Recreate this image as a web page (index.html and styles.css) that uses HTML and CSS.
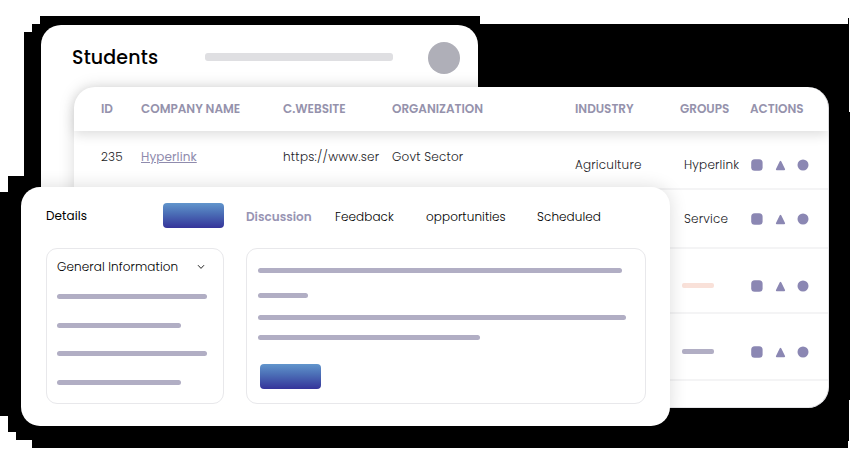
FILE: index.html
```
<!DOCTYPE html>
<html lang="en">
<head>
<meta charset="utf-8">
<title>Students</title>
<link rel="stylesheet" href="styles.css">
</head>
<body>
<main class="stage">
  <svg class="backdrop" width="850" height="450" viewBox="0 0 850 450" shape-rendering="crispEdges" aria-hidden="true">
    <path d="M40 16H480V24H848V18H849V112H850V400H849V441H848V448H32V440H16V432H8V416H0V192H8V176H24V32H32V24H40Z"/>
  </svg>
  <svg class="symbols" width="0" height="0" aria-hidden="true">
    <symbol id="actions" viewBox="0 0 60 14">
      <rect x="1.2" y="1.3" width="11.4" height="11.4" rx="3.5"/>
      <path d="M30.5 3.6L34.3 11.4H26.7Z" stroke="#8b87b3" stroke-width="1.6" stroke-linejoin="round"/>
      <circle cx="53" cy="7" r="5.5"/>
    </symbol>
  </svg>

  <section class="window students">
    <h1 class="title">Students</h1>
    <span class="search"></span>
    <span class="avatar"></span>
  </section>

  <section class="window table">
    <div class="row head">
      <span>ID</span><span>COMPANY NAME</span><span>C.WEBSITE</span><span>ORGANIZATION</span><span>INDUSTRY</span><span>GROUPS</span><span>ACTIONS</span>
    </div>
    <div class="row first">
      <span class="up">235</span><span class="up link">Hyperlink</span><span class="up url">https://www.ser</span><span class="up">Govt Sector</span><span>Agriculture</span><span class="group">Hyperlink</span><svg class="actions"><use href="#actions"/></svg>
    </div>
    <div class="row second">
      <span class="group">Service</span><svg class="actions"><use href="#actions"/></svg>
    </div>
    <div class="row third">
      <span class="group"><i class="pill peach"></i></span><svg class="actions"><use href="#actions"/></svg>
    </div>
    <div class="row fourth">
      <span class="group"><i class="pill"></i></span><svg class="actions"><use href="#actions"/></svg>
    </div>
  </section>

  <section class="window details">
    <nav class="tabs">
      <span class="name">Details</span><span class="button"></span><span class="current">Discussion</span><span>Feedback</span><span>opportunities</span><span>Scheduled</span>
    </nav>
    <div class="panels">
      <div class="panel general">
        <div class="panel-head"><span>General Information</span>
          <svg class="chevron" width="8" height="6" viewBox="0 0 8 6"><path d="M1 1.2L4 4.4L7 1.2"/></svg>
        </div>
        <i class="line wide"></i><i class="line"></i><i class="line wide"></i><i class="line"></i>
      </div>
      <div class="panel discussion">
        <i class="line l1"></i><i class="line l2"></i><i class="line l3"></i><i class="line l4"></i>
        <span class="button"></span>
      </div>
    </div>
  </section>
</main>
</body>
</html>
```
FILE: styles.css
```
* { box-sizing: border-box; }
body {
  margin: 0;
  background: #fff;
  color: #222226;
  font: 300 12px/18px Poppins, Inter, "Open Sans", sans-serif;
}
.stage { position: relative; width: 850px; height: 450px; overflow: hidden; }
.backdrop { display: block; }
.symbols { position: absolute; }
.window { position: absolute; background: #fff; }
span { white-space: nowrap; }

.students {
  left: 41px; top: 25px; width: 437px; height: 240px;
  border-radius: 20px;
  padding: 16px 18px 0 31px;
  display: flex; align-items: flex-start;
}
.title { margin: 0; width: 133px; font-size: 19px; line-height: 33px; font-weight: 500; color: #000; letter-spacing: 0.15px; }
.search { width: 188px; height: 8px; border-radius: 3px; background: #dfdfe2; margin-top: 12px; }
.avatar { width: 32px; height: 32px; border-radius: 50%; background: #afafb8; margin-left: auto; margin-top: 1px; }

.table {
  left: 74px; top: 87px; width: 755px; height: 321px;
  border-radius: 21px;
  border-right: 1px solid #e5e5e8;
  border-bottom: 1px solid #e5e5e8;
  box-shadow: 0 0 16px rgba(0, 0, 0, .15);
}
.row {
  display: grid;
  grid-template-columns: 40px 142px 109px 183px 105px 70px 60px;
  padding-left: 27px;
  align-items: center;
  border-bottom: 2px solid #f4f4f5;
  letter-spacing: 0.2px;
}
.head {
  height: 44px;
  border: 0;
  border-radius: 21px 21px 0 0;
  box-shadow: 0 4px 12px rgba(0, 0, 0, .13);
  color: #9592ac;
  font-weight: 600;
  letter-spacing: 0;
}
.first { height: 59px; padding-top: 11px; }
.second { height: 59px; }
.third { height: 65px; padding-top: 10px; }
.fourth { height: 67px; padding-top: 10px; }
.up { margin-top: -17px; }
.url { letter-spacing: 0.25px; }
.group { grid-column: 6; padding-left: 4px; }
.actions { grid-column: 7; width: 60px; height: 14px; fill: #8b87b3; }
.link { color: #8f8bad; font-weight: 400; text-decoration: underline; letter-spacing: 0.1px; }
.pill { display: block; width: 32px; height: 5px; margin-left: -2px; border-radius: 2px; background: #b1aec4; }
.peach { background: #f9e1d9; }

.details {
  left: 21px; top: 187px; width: 649px; height: 239px;
  border-radius: 19px;
  padding: 16px 24px 22px 25px;
  box-shadow: 0 0 18px rgba(0, 0, 0, .14);
  color: #000;
}
.tabs {
  display: grid;
  grid-template-columns: 117px 83px 89px 91px 111px 1fr;
  align-items: center;
  height: 25px;
  letter-spacing: 0.08px;
}
.tabs span:not(.button, .name) { padding-top: 2px; }
.name { font-weight: 400; }
.tabs .current { color: #9894b3; font-weight: 600; letter-spacing: 0; }
.button {
  display: block; width: 61px; height: 25px; border-radius: 4px;
  background: linear-gradient(#6195cc, #4c70b7 40%, #35349a);
}
.panels { display: flex; gap: 22px; margin-top: 20px; }
.panel { height: 156px; border: 1px solid #e8e8eb; border-radius: 11px; }
.general { width: 178px; padding: 9px 10px; }
.panel-head { display: flex; align-items: center; justify-content: space-between; height: 18px; padding-right: 8px; margin-bottom: 18px; letter-spacing: 0.1px; }
.chevron path { fill: none; stroke: #222; stroke-width: 1; }
.line { display: block; width: 124px; height: 5px; border-radius: 2.5px; background: #b1aec4; margin-bottom: 23.5px; }
.wide { width: 150px; }
.discussion { width: 400px; padding: 19px 11px; }
.l1 { width: 364px; margin-bottom: 20px; }
.l2 { width: 50px; margin-bottom: 17px; }
.l3 { width: 368px; margin-bottom: 15px; }
.l4 { width: 222px; margin-bottom: 24px; }
.discussion .button { margin-left: 2px; }
```
